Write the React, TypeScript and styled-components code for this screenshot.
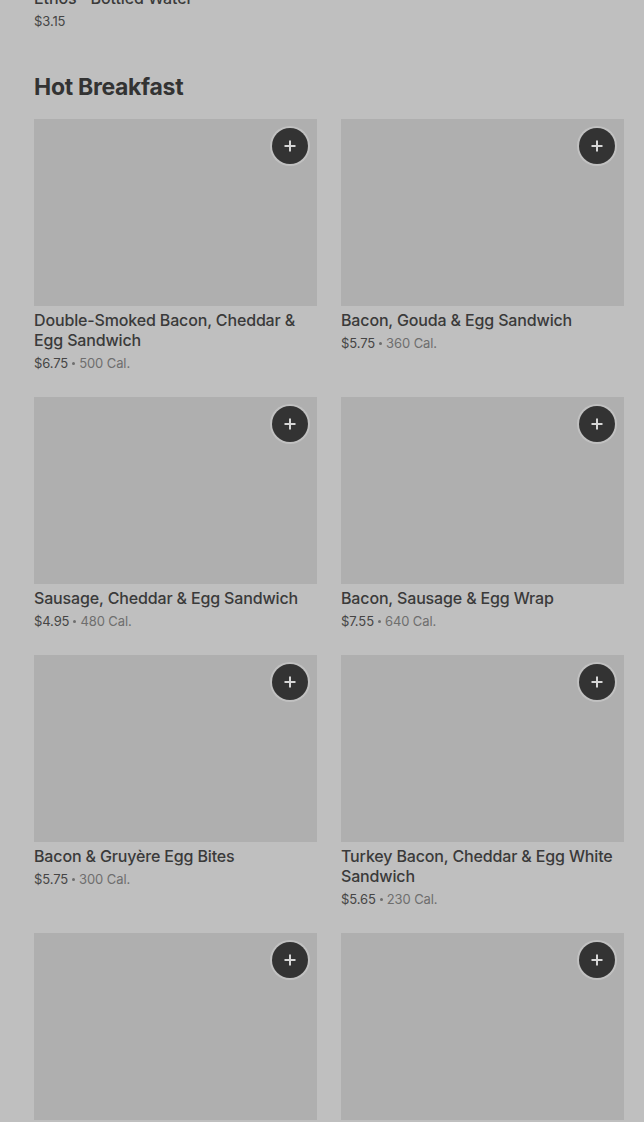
import React from 'react';
import styled, { createGlobalStyle } from 'styled-components';

const GlobalStyle = createGlobalStyle`
  html, body {
    margin: 0;
    padding: 0;
    background: #bfbfbf;
    font-family: Inter, "Noto Sans", sans-serif;
    -webkit-font-smoothing: antialiased;
  }
`;

interface Item {
  name: string;
  price: string;
  cal?: string;
}

const hotBreakfast: Item[] = [
  { name: 'Double-Smoked Bacon, Cheddar & Egg Sandwich', price: '$6.75', cal: '500 Cal.' },
  { name: 'Bacon, Gouda & Egg Sandwich', price: '$5.75', cal: '360 Cal.' },
  { name: 'Sausage, Cheddar & Egg Sandwich', price: '$4.95', cal: '480 Cal.' },
  { name: 'Bacon, Sausage & Egg Wrap', price: '$7.55', cal: '640 Cal.' },
  { name: 'Bacon & Gruyère Egg Bites', price: '$5.75', cal: '300 Cal.' },
  { name: 'Turkey Bacon, Cheddar & Egg White Sandwich', price: '$5.65', cal: '230 Cal.' },
  { name: 'Spinach, Feta & Egg White Wrap', price: '$4.95', cal: '290 Cal.' },
  { name: 'Impossible™ Breakfast Sandwich', price: '$6.45', cal: '420 Cal.' },
];

const Page = styled.div`
  padding: 0 20px 0 34px;
  height: 1122px;
  overflow: hidden;
`;

const PrevItem = styled.div`
  margin-top: -12px;
`;

const PrevName = styled.div`
  font-size: 16px;
  line-height: 20px;
  font-weight: 500;
  letter-spacing: -0.1px;
  color: #3a3a3a;
`;

const SectionTitle = styled.h2`
  margin: 42px 0 0;
  font-size: 23px;
  line-height: 28px;
  font-weight: 700;
  letter-spacing: -0.3px;
  color: #333;
`;

const Grid = styled.div`
  margin-top: 18px;
  display: grid;
  grid-template-columns: 283px 283px;
  column-gap: 24px;
  row-gap: 24px;
`;

const Card = styled.div`
  display: flex;
  flex-direction: column;
`;

const Photo = styled.div`
  position: relative;
  height: 187px;
  background: #afafaf;
`;

const AddButton = styled.button`
  position: absolute;
  top: 9px;
  right: 9px;
  width: 36px;
  height: 36px;
  border-radius: 50%;
  border: none;
  padding: 0;
  background: #333333;
  box-shadow: 0 0 0 2px rgba(205, 205, 205, 0.6);
  display: flex;
  align-items: center;
  justify-content: center;
  cursor: pointer;
`;

const Name = styled.div`
  margin-top: 4px;
  font-size: 16px;
  line-height: 20px;
  font-weight: 500;
  letter-spacing: -0.15px;
  color: #3a3a3a;
`;

const Meta = styled.div`
  margin-top: 3px;
  height: 20px;
  font-size: 13px;
  line-height: 20px;
  letter-spacing: -0.1px;
  color: #454545;
`;

const Cal = styled.span`
  color: #6e6e6e;
`;

const Dot = styled.span`
  display: inline-block;
  width: 3px;
  height: 3px;
  margin: 0 4px 2px;
  border-radius: 50%;
  background: #6e6e6e;
  vertical-align: middle;
`;

function Plus() {
  return (
    <svg width="14" height="14" viewBox="0 0 14 14">
      <path d="M7 1.5v11M1.5 7h11" stroke="#d6d6d6" strokeWidth="2" />
    </svg>
  );
}

function MenuCard({ item }: { item: Item }) {
  return (
    <Card>
      <Photo>
        <AddButton aria-label="Add">
          <Plus />
        </AddButton>
      </Photo>
      <Name>{item.name}</Name>
      <Meta>
        {item.price}
        {item.cal && (
          <>
            <Dot />
            <Cal>{item.cal}</Cal>
          </>
        )}
      </Meta>
    </Card>
  );
}

export default function App() {
  return (
    <>
      <GlobalStyle />
      <Page>
        <PrevItem>
          <PrevName>Ethos™ Bottled Water</PrevName>
          <Meta>$3.15</Meta>
        </PrevItem>
        <SectionTitle>Hot Breakfast</SectionTitle>
        <Grid>
          {hotBreakfast.map((item) => (
            <MenuCard key={item.name} item={item} />
          ))}
        </Grid>
      </Page>
    </>
  );
}
